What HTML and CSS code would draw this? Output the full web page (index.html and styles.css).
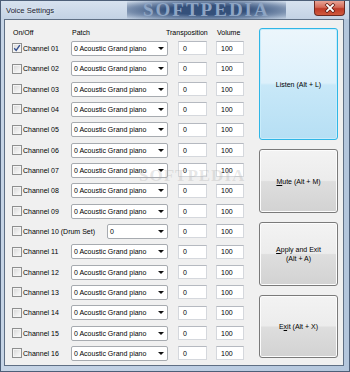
FILE: index.html
```html
<!DOCTYPE html>
<html lang="en">
<head>
    <meta charset="UTF-8">
    <title>Voice Settings</title>
    <link rel="stylesheet" href="styles.css">
</head>
<body>
    <div class="window">
        <div class="titlebar">
            <span class="title">Voice Settings</span>
            <span class="brand">SOFTPEDIA</span>
            <span class="close">
                <svg width="12" height="10" viewBox="0 0 12 10">
                    <path d="M3 2 L9 8 M9 2 L3 8" stroke="#5a1a12" stroke-width="3.2" stroke-linecap="square"/>
                    <path d="M3 2 L9 8 M9 2 L3 8" stroke="#ffffff" stroke-width="1.8" stroke-linecap="square"/>
                </svg>
            </span>
        </div>

        <div class="client">
            <div class="channels">
                <div class="row head">
                    <span>On/Off</span>
                    <span>Patch</span>
                    <span class="h-trans">Transposition</span>
                    <span>Volume</span>
                </div>

                <div class="row">
                    <label class="chk"><span class="box">
                        <svg width="8" height="8" viewBox="0 0 8 8"><path d="M1.2 4.2 L3.2 6.4 L6.8 1.2" fill="none" stroke="#35508f" stroke-width="1.4"/></svg>
                    </span>Channel 01</label>
                    <div class="combo"><span>0 Acoustic Grand piano</span><i class="arrow"></i></div>
                    <div class="field">0</div>
                    <div class="field">100</div>
                </div>
                <div class="row">
                    <label class="chk"><span class="box"></span>Channel 02</label>
                    <div class="combo"><span>0 Acoustic Grand piano</span><i class="arrow"></i></div>
                    <div class="field">0</div>
                    <div class="field">100</div>
                </div>
                <div class="row">
                    <label class="chk"><span class="box"></span>Channel 03</label>
                    <div class="combo"><span>0 Acoustic Grand piano</span><i class="arrow"></i></div>
                    <div class="field">0</div>
                    <div class="field">100</div>
                </div>
                <div class="row">
                    <label class="chk"><span class="box"></span>Channel 04</label>
                    <div class="combo"><span>0 Acoustic Grand piano</span><i class="arrow"></i></div>
                    <div class="field">0</div>
                    <div class="field">100</div>
                </div>
                <div class="row">
                    <label class="chk"><span class="box"></span>Channel 05</label>
                    <div class="combo"><span>0 Acoustic Grand piano</span><i class="arrow"></i></div>
                    <div class="field">0</div>
                    <div class="field">100</div>
                </div>
                <div class="row">
                    <label class="chk"><span class="box"></span>Channel 06</label>
                    <div class="combo"><span>0 Acoustic Grand piano</span><i class="arrow"></i></div>
                    <div class="field">0</div>
                    <div class="field">100</div>
                </div>
                <div class="row">
                    <label class="chk"><span class="box"></span>Channel 07</label>
                    <div class="combo"><span>0 Acoustic Grand piano</span><i class="arrow"></i></div>
                    <div class="field">0</div>
                    <div class="field">100</div>
                </div>
                <div class="row">
                    <label class="chk"><span class="box"></span>Channel 08</label>
                    <div class="combo"><span>0 Acoustic Grand piano</span><i class="arrow"></i></div>
                    <div class="field">0</div>
                    <div class="field">100</div>
                </div>
                <div class="row">
                    <label class="chk"><span class="box"></span>Channel 09</label>
                    <div class="combo"><span>0 Acoustic Grand piano</span><i class="arrow"></i></div>
                    <div class="field">0</div>
                    <div class="field">100</div>
                </div>
                <div class="row">
                    <label class="chk"><span class="box"></span>Channel 10 (Drum Set)</label>
                    <div class="combo drum"><span>0</span><i class="arrow"></i></div>
                    <div class="field">0</div>
                    <div class="field">100</div>
                </div>
                <div class="row">
                    <label class="chk"><span class="box"></span>Channel 11</label>
                    <div class="combo"><span>0 Acoustic Grand piano</span><i class="arrow"></i></div>
                    <div class="field">0</div>
                    <div class="field">100</div>
                </div>
                <div class="row">
                    <label class="chk"><span class="box"></span>Channel 12</label>
                    <div class="combo"><span>0 Acoustic Grand piano</span><i class="arrow"></i></div>
                    <div class="field">0</div>
                    <div class="field">100</div>
                </div>
                <div class="row">
                    <label class="chk"><span class="box"></span>Channel 13</label>
                    <div class="combo"><span>0 Acoustic Grand piano</span><i class="arrow"></i></div>
                    <div class="field">0</div>
                    <div class="field">100</div>
                </div>
                <div class="row">
                    <label class="chk"><span class="box"></span>Channel 14</label>
                    <div class="combo"><span>0 Acoustic Grand piano</span><i class="arrow"></i></div>
                    <div class="field">0</div>
                    <div class="field">100</div>
                </div>
                <div class="row">
                    <label class="chk"><span class="box"></span>Channel 15</label>
                    <div class="combo"><span>0 Acoustic Grand piano</span><i class="arrow"></i></div>
                    <div class="field">0</div>
                    <div class="field">100</div>
                </div>
                <div class="row">
                    <label class="chk"><span class="box"></span>Channel 16</label>
                    <div class="combo"><span>0 Acoustic Grand piano</span><i class="arrow"></i></div>
                    <div class="field">0</div>
                    <div class="field">100</div>
                </div>
            </div>

            <div class="buttons">
                <button class="btn listen">Listen (Alt + L)</button>
                <button class="btn"><u>M</u>ute (Alt + M)</button>
                <button class="btn"><u>A</u>pply and Exit<br>(Alt + A)</button>
                <button class="btn">E<u>x</u>it (Alt + X)</button>
            </div>

            <span class="ghost">SOFTPEDIA</span>
        </div>
    </div>
</body>
</html>
```

FILE: styles.css
```css
* {
    box-sizing: border-box;
    font-family: 'Liberation Sans', Arial, sans-serif;
}

html, body {
    margin: 0;
    overflow: hidden;
}

.window {
    width: 350px;
    height: 372px;
    display: flex;
    flex-direction: column;
    padding: 0 5px 5px 3px;
    border: 1px solid #4d5f78;
    background: linear-gradient(90deg, #c6d4e5 0%, #bccde2 60%, #b4c6dc 100%);
}

/* title bar */
.titlebar {
    position: relative;
    height: 18px;
    display: flex;
    align-items: center;
    margin-right: -5px;
    background: linear-gradient(180deg, #d7e2ef 0%, #c3d2e4 100%);
    margin-left: -3px;
    padding-left: 5px;
}

.title {
    font-size: 7.6px;
    color: #1c2430;
    text-shadow: 0 0 4px #eef3f9;
}

.brand {
    position: absolute;
    left: 126px;
    top: 0;
    font-family: 'Liberation Serif', serif;
    font-weight: bold;
    font-size: 19px;
    letter-spacing: 2px;
    color: #8ea5c4;
    background: radial-gradient(ellipse at center, #34507a 35%, rgba(60, 88, 130, 0.6) 68%, rgba(195, 210, 228, 0) 100%);
    padding: 0 16px;
    line-height: 18px;
    height: 18px;
}

.close {
    margin-left: auto;
    margin-right: 4px;
    align-self: flex-start;
    width: 31px;
    height: 15px;
    display: flex;
    align-items: center;
    justify-content: center;
    border: 1px solid #6b2a22;
    border-top: none;
    border-radius: 0 0 4px 4px;
    background: linear-gradient(180deg, #e8a496 0%, #d36a58 45%, #bd3a27 55%, #cf5a3e 100%);
}

/* client area */
.client {
    position: relative;
    flex: 1;
    display: flex;
    border: 1px solid #5f6f84;
    background: #f0f0f0;
}

.channels {
    width: 254px;
    padding-left: 7px;
    display: grid;
    grid-template-rows: 18.33px repeat(16, 20.33px);
}

.row {
    display: grid;
    grid-template-columns: 59px 107px 38px 28px;
    align-items: center;
    font-size: 7px;
    color: #000;
}

.row.head {
    align-items: end;
    padding-bottom: 2px;
}

.row.head span {
    padding-left: 1px;
}

.h-trans {
    margin-left: -13px;
}

.chk {
    display: flex;
    align-items: center;
    white-space: nowrap;
}

.box {
    width: 10px;
    height: 10px;
    margin-right: 1px;
    flex: none;
    display: flex;
    align-items: center;
    justify-content: center;
    border: 1px solid #8e8f8f;
    background: linear-gradient(135deg, #d6d6d6 0%, #eeeeee 60%, #fbfbfb 100%);
    box-shadow: inset 0 0 0 1px #f4f4f4;
}

.combo {
    position: relative;
    width: 97px;
    height: 15px;
    display: flex;
    align-items: center;
    padding-left: 2px;
    border: 1px solid #a7abb0;
    border-radius: 2px;
    background: #fff;
}

.combo.drum {
    width: 61px;
    margin-left: 36px;
}

.arrow {
    margin-left: auto;
    margin-right: 3px;
    width: 0;
    height: 0;
    border-left: 3px solid transparent;
    border-right: 3px solid transparent;
    border-top: 3px solid #111;
}

.field {
    width: 29px;
    height: 14px;
    display: flex;
    align-items: center;
    padding-left: 4px;
    border: 1px solid #d5d8dd;
    border-top-color: #b5b9c0;
    background: #fff;
}

.row .field:last-child {
    width: 28px;
}

/* buttons */
.buttons {
    width: 79px;
    padding-top: 8px;
    display: flex;
    flex-direction: column;
    gap: 9px;
}

.btn {
    height: 64px;
    padding: 0;
    border: 1px solid #7a7a7a;
    border-radius: 3px;
    font-size: 7px;
    color: #000;
    line-height: 9px;
    box-shadow: inset 0 0 0 1px #fcfcfc;
    background: linear-gradient(180deg, #f3f3f3 0%, #ececec 49%, #dedede 51%, #d2d2d2 100%);
}

.btn:last-child {
    height: 63px;
}

.btn.listen {
    height: 112px;
    border-color: #2fb6e6;
    box-shadow: inset 0 0 0 1px #c9ecfb;
    background: linear-gradient(180deg, #ecf6fc 0%, #dcf0fb 49%, #c8e8f8 51%, #b6dff4 100%);
}

.ghost {
    position: absolute;
    left: 134px;
    top: 146px;
    font-family: 'Liberation Serif', serif;
    font-weight: bold;
    font-size: 17px;
    letter-spacing: 1px;
    color: rgba(170, 170, 170, 0.3);
    pointer-events: none;
}
```
